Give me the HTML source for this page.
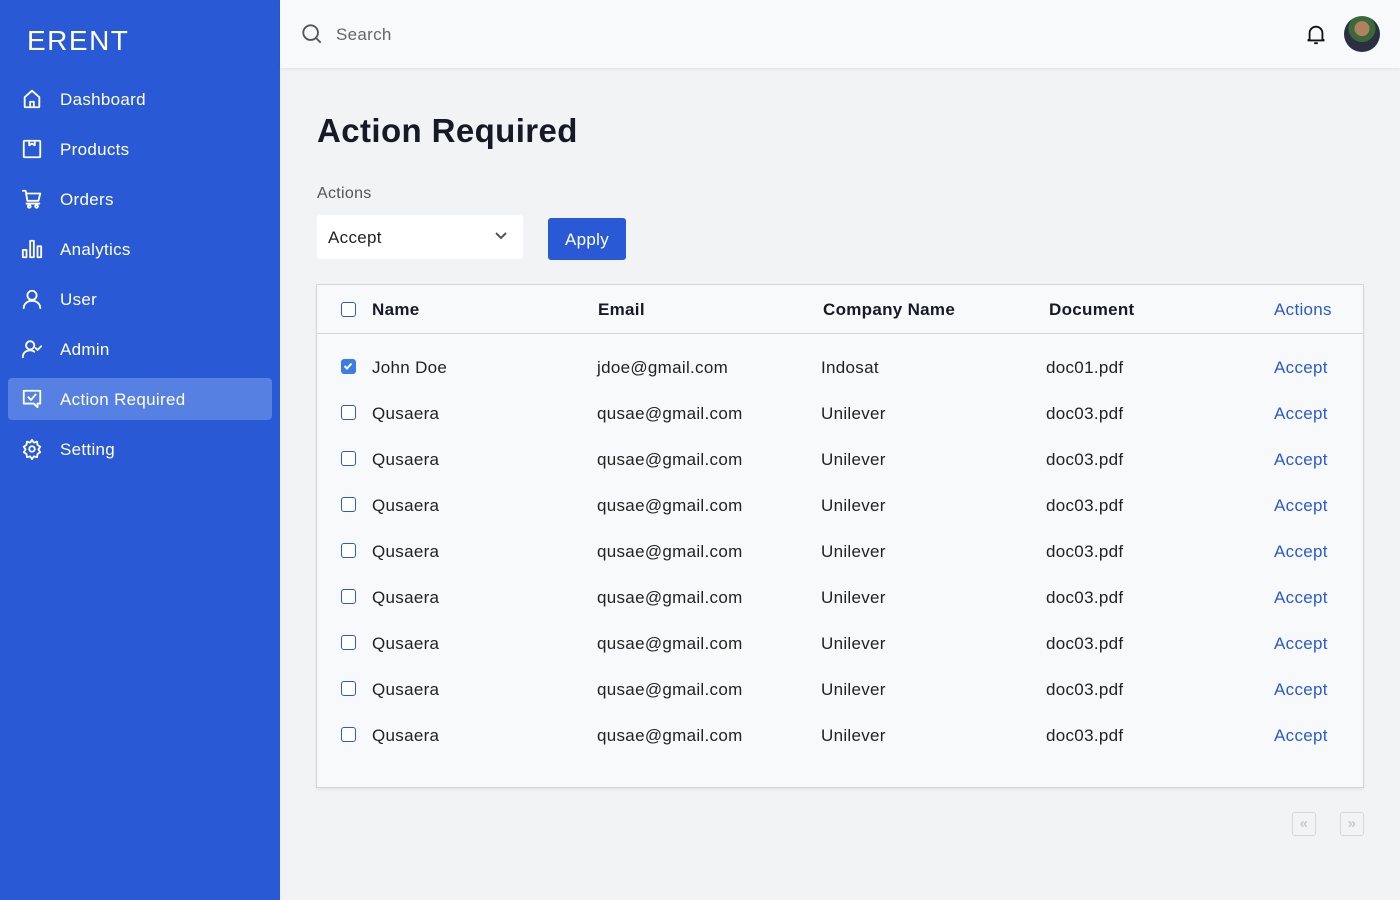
<!DOCTYPE html>
<html><head><meta charset="utf-8">
<style>
*{box-sizing:border-box;margin:0;padding:0}
body{width:1400px;height:900px;overflow:hidden;background:#f2f3f5;font-family:"Liberation Sans",sans-serif;position:relative;letter-spacing:0.3px}
.side{position:absolute;left:0;top:0;width:280px;height:900px;background:#2a59d6;color:#fff}
.logo{position:absolute;left:27px;top:25px;font-size:28px;letter-spacing:1.5px;font-weight:normal}
.nav{position:absolute;left:8px;width:264px;height:42px;border-radius:4px;display:flex;align-items:center}
.nav.active{background:#5680e2}
.nav svg{position:absolute;left:13px;width:22px;height:22px;fill:none;stroke:#fff;stroke-width:2;stroke-linecap:round;stroke-linejoin:round}
.nav span{position:absolute;left:52px;top:12px;font-size:17px}
.top{position:absolute;left:280px;top:0;right:0;height:68px;background:#f8f9fa;box-shadow:0 1px 3px rgba(0,0,0,.08)}
h1{position:absolute;left:317px;top:112px;font-size:33px;font-weight:bold;color:#151a26;letter-spacing:0.4px}
.lbl{position:absolute;left:317px;top:185px;font-size:16px;color:#555}
.sel{position:absolute;left:317px;top:215px;width:206px;height:44px;background:#fff;border-radius:3px;font-size:17px;color:#222;padding:13px 11px}
.btn{position:absolute;left:548px;top:218px;width:78px;height:42px;background:#2a59d6;border-radius:3px;color:#fff;font-size:17px;text-align:center;line-height:44px}
.tbl{position:absolute;left:316px;top:284px;width:1048px;height:504px;background:#f8f9fa;border:1px solid #d4d6dc;box-shadow:0 2px 3px rgba(0,0,0,.06)}
.hd{position:absolute;left:0;right:0;top:0;height:49px;border-bottom:1px solid #d4d6dc}
.c{position:absolute;font-size:17px;color:#222;white-space:nowrap}
.hd .c{top:15px;font-weight:bold;color:#151a26}
.cb{position:absolute;left:24px;width:15px;height:15px;border:1.5px solid #2a59d6;border-radius:3px;background:#fff}
.cb.on{background:#3b7de8;border-color:#3b7de8}
.blue{color:#2a59d6!important;font-weight:normal!important}
.pg{position:absolute;top:812px;width:24px;height:24px;border:1px solid #d6d8dd;border-radius:3px;color:#c8cad0;font-size:15px;font-weight:bold;text-align:center;line-height:22px}
</style></head><body>
<div class="side">
<div class="logo">ERENT</div>
<div class="nav" style="top:78px"><svg viewBox="0 0 24 24"><path d="M4 10l8-7 8 7v10a1 1 0 0 1-1 1H5a1 1 0 0 1-1-1z"/><path d="M10 21v-6h4v6"/></svg><span>Dashboard</span></div>
<div class="nav" style="top:128px"><svg viewBox="0 0 24 24"><rect x="3" y="3" width="18" height="18" rx="1"/><path d="M9 3v5l3-2 3 2V3"/></svg><span>Products</span></div>
<div class="nav" style="top:178px"><svg viewBox="0 0 24 24"><path d="M2 3h3l2 11h12l2-8H6"/><path d="M6 17h14"/><circle cx="9" cy="20" r="1.5"/><circle cx="17" cy="20" r="1.5"/></svg><span>Orders</span></div>
<div class="nav" style="top:228px"><svg viewBox="0 0 24 24"><rect x="2" y="13" width="4" height="8"/><rect x="10" y="3" width="4" height="18"/><rect x="18" y="9" width="4" height="12"/></svg><span>Analytics</span></div>
<div class="nav" style="top:278px"><svg viewBox="0 0 24 24"><circle cx="12" cy="8" r="5"/><path d="M3 22c0-5 4-8 9-8s9 3 9 8"/></svg><span>User</span></div>
<div class="nav" style="top:328px"><svg viewBox="0 0 24 24"><circle cx="10" cy="8" r="4.5"/><path d="M2 21c0-5 3.5-7.5 8-7.5 2 0 3.5.5 4.5 1.5"/><path d="M16 11l2 2 4-4"/></svg><span>Admin</span></div>
<div class="nav active" style="top:378px"><svg viewBox="0 0 24 24"><path d="M3 3h18v14h-3v4l-4-4H3z"/><path d="M8 10l3 3 5-6"/></svg><span>Action Required</span></div>
<div class="nav" style="top:428px"><svg viewBox="0 0 24 24"><circle cx="12" cy="12" r="3"/><path d="M12 2l2 3 3.5-1 .5 3.5 3 2-2 3 2 3-3 2-.5 3.5-3.5-1-2 3-2-3-3.5 1L6 17.5l-3-2 2-3-2-3 3-2L6.5 4 10 5z"/></svg><span>Setting</span></div>
</div>
<div class="top">
<svg style="position:absolute;left:21px;top:23px" width="22" height="22" viewBox="0 0 24 24" fill="none" stroke="#555" stroke-width="2"><circle cx="10.5" cy="10.5" r="8"/><path d="M16.5 16.5l5 5"/></svg>
<div style="position:absolute;left:56px;top:25px;font-size:17px;color:#666">Search</div>
<svg style="position:absolute;left:1025px;top:22px" width="22" height="24" viewBox="0 0 24 24" fill="none" stroke="#111" stroke-width="2"><path d="M5 18V11a7 7 0 0 1 14 0v7l2 1H3z"/><path d="M10 22h4"/></svg>
<div style="position:absolute;left:1064px;top:16px;width:36px;height:36px;border-radius:50%;background:radial-gradient(circle at 50% 35%,#b08060 0 25%,#3a6a3a 26% 45%,#2a3040 46%)"></div>
</div>
<h1>Action Required</h1>
<div class="lbl">Actions</div>
<div class="sel">Accept<svg style="position:absolute;right:16px;top:17px" width="12" height="8" viewBox="0 0 12 8" fill="none" stroke="#555" stroke-width="2"><path d="M1 1l5 5 5-5"/></svg></div>
<div class="btn">Apply</div>
<div class="tbl">
<div class="hd"><div class="cb" style="top:17px"></div><div class="c" style="left:55px">Name</div><div class="c" style="left:281px">Email</div><div class="c" style="left:506px">Company Name</div><div class="c" style="left:732px">Document</div><div class="c blue" style="left:957px">Actions</div></div>
<div id="rows"></div>
</div>
<div class="pg" style="left:1292px">&#171;</div>
<div class="pg" style="left:1340px">&#187;</div>
<script>
var h='';for(var i=0;i<9;i++){var t=73+i*46;var f=i==0;
h+='<div class="cb'+(f?' on':'')+'" style="top:'+(t+1)+'px">'+(f?'<svg width="12" height="12" viewBox="0 0 12 12" style="position:absolute;left:0;top:0" fill="none" stroke="#fff" stroke-width="2"><path d="M2.5 6l2.5 2.5 4.5-5"/></svg>':'')+'</div>'+
'<div class="c" style="top:'+t+'px;left:55px">'+(f?'John Doe':'Qusaera')+'</div>'+
'<div class="c" style="top:'+t+'px;left:280px">'+(f?'jdoe@gmail.com':'qusae@gmail.com')+'</div>'+
'<div class="c" style="top:'+t+'px;left:504px">'+(f?'Indosat':'Unilever')+'</div>'+
'<div class="c" style="top:'+t+'px;left:729px">'+(f?'doc01.pdf':'doc03.pdf')+'</div>'+
'<div class="c blue" style="top:'+t+'px;left:957px">Accept</div>';}
document.getElementById('rows').innerHTML=h;
</script>
</body></html>
